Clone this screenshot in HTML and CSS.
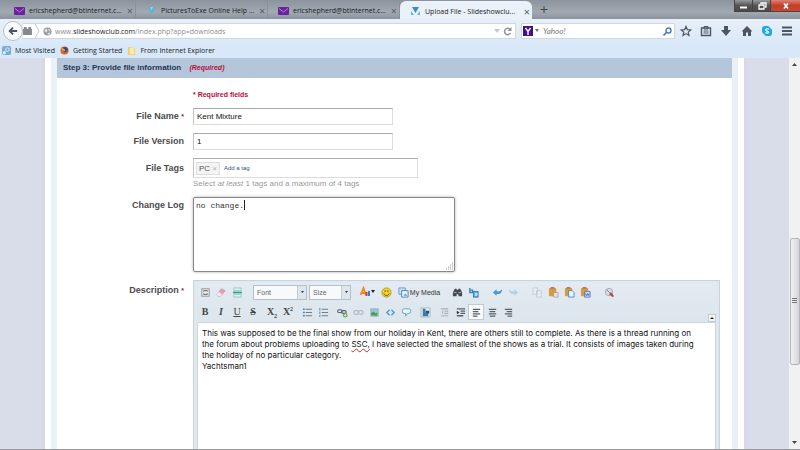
FILE: index.html
```html
<!DOCTYPE html>
<html lang="en">
<head>
<meta charset="utf-8">
<title>Upload File - Slideshowclub</title>
<link rel="stylesheet" href="styles.css">
</head>
<body>
<svg class="defs" aria-hidden="true">
  <symbol id="mail" viewBox="0 0 11 8"><rect width="11" height="8" rx="1" fill="#6b21a0"/><path d="M1 1.500 5.500 5 10 1.500" fill="none" stroke="#b48ad0"/></symbol>
  <symbol id="clip" viewBox="0 0 12 12"><rect x="1" y="1" width="8" height="9" rx="1" fill="#d99a3c"/><rect x="3" y="0" width="4" height="2" fill="#9b8468"/></symbol>
</svg>
<header class="browser">
  <div class="tabs">
    <div class="tab"><svg class="fav" viewBox="0 0 11 8"><use href="#mail"/></svg><span class="tab-title">ericshepherd@btinternet.c...</span><button class="close" aria-label="Close tab">×</button></div>
    <div class="tab"><svg class="fav" viewBox="0 0 11 8"><path d="M2 0h7L5.500 7z" fill="#54b2e4"/><path d="M4 0h3L5.500 4z" fill="#8bd0f0"/></svg><span class="tab-title">PicturesToExe Online Help ...</span><button class="close" aria-label="Close tab">×</button></div>
    <div class="tab"><svg class="fav" viewBox="0 0 11 8"><use href="#mail"/></svg><span class="tab-title">ericshepherd@btinternet.c...</span><button class="close" aria-label="Close tab">×</button></div>
    <div class="tab active"><svg class="fav" viewBox="0 0 11 8"><path d="M2 0h7L5.500 6z" fill="#2f8fc6"/><path d="M1 4v4h3zM10 4v4H7z" fill="#5cb4e0"/></svg><span class="tab-title">Upload File - Slideshowclu...</span><button class="close" aria-label="Close tab">×</button></div>
    <button class="new-tab" aria-label="New tab">+</button>
    <div class="window-buttons">
      <button class="win" aria-label="Minimize"><svg viewBox="0 0 10 8"><path d="M1 5.500h7" stroke="#fff" stroke-width="2"/></svg></button>
      <button class="win" aria-label="Restore"><svg viewBox="0 0 10 8"><path d="M4 2V1h5v4H8M2 3h5v4H2z" fill="none" stroke="#fff" stroke-width="1.300"/></svg></button>
      <button class="win exit" aria-label="Close"><svg viewBox="0 0 10 8"><path d="M3 1.500 7 6.500M7 1.500 3 6.500" stroke="#fff" stroke-width="1.700"/></svg></button>
    </div>
  </div>
  <nav class="navbar">
    <button class="back" aria-label="Back"><svg viewBox="0 0 12 12"><path d="M11 6H3M6 2 2 6l4 4" fill="none" stroke="#4b5560" stroke-width="2.200"/></svg></button>
    <div class="urlbar">
      <svg class="brick" viewBox="0 0 10 9"><path d="M0 2h1V0h3v2h2V0h3v2h1v7H0z" fill="#85898d"/></svg>
      <svg class="chev" viewBox="0 0 5 14"><path d="M0 0 4 7 0 14" fill="none" stroke="#c5ccd4"/></svg>
      <svg class="globe" viewBox="0 0 10 10"><circle cx="5" cy="5" r="4.500" fill="#999da1"/><path d="M2 3l2-1 1 2-1 2-2-1zM6 2l2 1v2L6 4zM5 7l2-1 1 1-2 2z" fill="#e4e6e8"/></svg>
      <span class="url">www.<b>slideshowclub.com</b>/index.php?app=downloads</span>
      <svg class="reload" viewBox="0 0 20 10"><path d="M1 3h6L4 7z" fill="#c4c8cc"/><path d="M17 3.200A3.200 3.200 0 1 0 17.500 7" fill="none" stroke="#8d9196" stroke-width="1.500"/><path d="M18.500 1v4h-4z" fill="#8d9196"/></svg>
    </div>
    <div class="searchbar">
      <svg class="yahoo" viewBox="0 0 10 10"><rect width="10" height="10" fill="#43108c"/><path d="M2.500 2 5 5.500 7.500 2M5 5.500V9" fill="none" stroke="#fff" stroke-width="1.400"/></svg>
      <svg class="drop" viewBox="0 0 5 4"><path d="M0 0h4L2 3z" fill="#777"/></svg>
      <input type="search" class="search" placeholder="Yahoo!" aria-label="Search with Yahoo">
      <svg class="lens" viewBox="0 0 9 9"><circle cx="5.500" cy="3.500" r="2.500" fill="none" stroke="#4779b8" stroke-width="1.400"/><path d="M3.500 5.500.5 8.500" stroke="#4779b8" stroke-width="1.700"/></svg>
    </div>
    <div class="nav-icons">
      <button aria-label="Bookmark"><svg viewBox="0 0 12 12"><path d="M6 1.500 7.300 4.600 10.800 4.900 8.200 7.100 9 10.500 6 8.600 3 10.500 3.800 7.100 1.200 4.900 4.700 4.600z" fill="none" stroke="#4d565f" stroke-width="1.200"/></svg></button>
      <button aria-label="Bookmarks list"><svg viewBox="0 0 12 12"><path d="M1.500 3h9v7.500h-9z" fill="none" stroke="#4d565f" stroke-width="1.400"/><path d="M4 1.500h4V4H4zM3.500 6h5M3.500 8h5" fill="none" stroke="#4d565f"/></svg></button>
      <button aria-label="Downloads"><svg viewBox="0 0 12 12"><path d="M4 1h4v4h3l-5 6-5-6h3z" fill="#4d565f"/></svg></button>
      <button aria-label="Home"><svg viewBox="0 0 12 12"><path d="M6 1 11 6l-1 1v4H7V7.500H5V11H2V7L1 6z" fill="#4d565f"/></svg></button>
      <button aria-label="Skype"><svg viewBox="0 0 12 12"><rect x="1" y="1" width="8" height="8" rx="3" fill="#18a7e8"/><rect x="3" y="3" width="8" height="8" rx="3" fill="#18a7e8"/><path d="M8 4.300C6.500 3.300 4.300 3.800 4.500 5c.2 1.400 3.200.8 3.200 2.100 0 1.300-2.200 1.300-3.300.4" fill="none" stroke="#fff" stroke-width="1.200"/></svg></button>
      <button aria-label="Menu"><svg viewBox="0 0 12 12"><path d="M1 2.500h10M1 6h10M1 9.500h10" stroke="#4d565f" stroke-width="2"/></svg></button>
    </div>
  </nav>
  <nav class="bookmarks">
    <a href="#"><svg viewBox="0 0 10 10"><rect width="10" height="10" rx="2" fill="#78abd3"/><path d="M1 6h3v3H1z" fill="#e6f3fc"/><circle cx="6" cy="4" r="2" fill="none" stroke="#e6f3fc"/></svg>Most Visited</a>
    <a href="#"><svg viewBox="0 0 10 10"><circle cx="5" cy="5" r="4.500" fill="#e0622a"/><circle cx="5.500" cy="4" r="3" fill="#2a4f8e"/><path d="M1 2c2 0 4 1 5 3-1 2-4 1-4-1z" fill="#f09a3a"/></svg>Getting Started</a>
    <a href="#"><svg viewBox="0 0 10 10"><path d="M1 1h4l1 1h3v8H1z" fill="#f0cf67"/><path d="M3 2h5v7H3z" fill="#fbeaa5"/></svg>From Internet Explorer</a>
  </nav>
</header>
<div class="viewport">
  <div class="gutter"></div>
  <main class="page">
    <h1 class="step">Step 3: Provide file information <em>(Required)</em></h1>
    <form class="form">
      <p class="required">* Required fields</p>
      <label class="label" for="name">File Name <i>*</i></label>
      <input class="field" id="name" type="text" value="Kent Mixture">
      <label class="label" for="version">File Version</label>
      <input class="field" id="version" type="text" value="1">
      <span class="label tall">File Tags</span>
      <div class="tags-cell">
        <div class="tags"><span class="tag">PC <button type="button" aria-label="Remove PC">×</button></span><a href="#">Add a tag</a></div>
        <p class="hint">Select <em>at least</em> 1 tags and a maximum of 4 tags</p>
      </div>
      <label class="label" for="log">Change Log</label>
      <div class="log-wrap">
        <textarea class="log" id="log">no change.</textarea>
        <span class="caret"></span>
        <svg class="grip" viewBox="0 0 9 9"><path d="M7 1h1M5 3h1M7 3h1M3 5h1M5 5h1M7 5h1M1 7h1M3 7h1M5 7h1M7 7h1" stroke="#999"/></svg>
      </div>
      <span class="label tall" id="desc-label">Description <i>*</i></span>
      <div class="editor">
        <div class="toolbar">
          <div class="row top">
            <div class="group">
              <button type="button" aria-label="Source"><svg viewBox="0 0 12 12"><rect x="2" y="2" width="8" height="8" fill="#eee" stroke="#8a9098"/><path d="M4 5V4h4v1M4 7v1h4V7" fill="none" stroke="#555"/></svg></button>
              <button type="button" aria-label="Remove format"><svg viewBox="0 0 12 12"><path d="m1 8 5-6 4 2-5 6H2z" fill="#eda0ac" stroke="#c88d9b" stroke-width=".7"/><path d="m1 8 2-2.500 3.500 2.500L5 10H2z" fill="#f7e8ee"/></svg></button>
              <button type="button" aria-label="Page break"><svg viewBox="0 0 12 12"><path d="M2 1h8v3H2zM2 8h8v3H2z" fill="#d6f1f1" stroke="#88bfc6" stroke-width=".8"/><path d="M1 6h10" stroke="#2ea66a" stroke-width="1.800"/></svg></button>
            </div>
            <div class="group combos">
              <button type="button" class="combo font"><span>Font</span><i><svg viewBox="0 0 5 4"><path d="M1 1h3L2.500 3z" fill="#333"/></svg></i></button>
              <button type="button" class="combo size"><span>Size</span><i><svg viewBox="0 0 5 4"><path d="M1 1h3L2.500 3z" fill="#333"/></svg></i></button>
            </div>
            <div class="group spaced">
              <button type="button" aria-label="Text color"><svg class="wide" viewBox="0 0 16 12"><path d="M1.500 9 4.500 2 7 9M3 7h3" fill="none" stroke="#ef8a1d" stroke-width="1.800"/><path d="M6.500 6h2v4h-2z" fill="#d43d31"/><path d="M9 5h2v5H9z" fill="#3b80c6"/><path d="M12 4h4l-2 3z" fill="#222"/></svg></button>
              <button type="button" aria-label="Emoticons"><svg viewBox="0 0 12 12"><circle cx="6" cy="6" r="5" fill="#f9d52b" stroke="#a38312" stroke-width=".8"/><path d="M4.500 3.500v2M7.500 3.500v2M3 7c1 3 5 3 6 0" fill="none" stroke="#594512"/></svg></button>
              <button type="button" class="media"><svg viewBox="0 0 12 12"><path d="M1 1h7v7H1z" fill="#c7dff3" stroke="#679bc9"/><path d="M4 4h7v7H4z" fill="#eef6fd" stroke="#477fb6"/><path d="M6 9.500 8 7l2 2.500z" fill="#5294c7"/></svg>My Media</button>
            </div>
            <div class="group">
              <button type="button" aria-label="Find"><svg viewBox="0 0 12 12"><path d="M3 2h2v1h2V2h2l2 4v4H7V8H5v2H1V6z" fill="#454b51"/><path d="M2 6h3M7 6h3" stroke="#aab0b6"/></svg></button>
              <button type="button" aria-label="Replace"><svg viewBox="0 0 12 12"><path d="M2 1v5h3V3.500H2" fill="none" stroke="#3580c3" stroke-width="1.400"/><rect x="6" y="5" width="5" height="6" fill="#67b0de" stroke="#2f78b5"/><path d="M3 7v3h2M8 7h2v2H8z" fill="none" stroke="#d4ebfa"/></svg></button>
            </div>
            <div class="group">
              <button type="button" aria-label="Undo"><svg viewBox="0 0 12 12"><path d="M1 6 5 2.500v2c3 1 4 0 6-2C11 7 8 8 5 7.500v2z" fill="#4598d3"/></svg></button>
              <button type="button" aria-label="Redo" class="dim"><svg viewBox="0 0 12 12"><path d="M11 6 7 2.500v2c-3 1-4 0-6-2C1 7 4 8 7 7.500v2z" fill="#6cb0df"/></svg></button>
            </div>
            <div class="group">
              <button type="button" aria-label="Copy" class="dim"><svg viewBox="0 0 12 12"><path d="M1 1h5v7H1zM5 4h5v7H5z" fill="#f4f7fb" stroke="#8f9db3"/></svg></button>
              <button type="button" aria-label="Paste"><svg viewBox="0 0 12 12"><use href="#clip"/><path d="M6 6h5v5H6z" fill="#e1e1dc" stroke="#969690" stroke-width=".7"/></svg></button>
              <button type="button" aria-label="Paste as text"><svg viewBox="0 0 12 12"><use href="#clip"/><path d="M5 4h4l2 2v5H5z" fill="#edf6ff" stroke="#458bd5"/></svg></button>
              <button type="button" aria-label="Paste from Word"><svg viewBox="0 0 12 12"><use href="#clip"/><path d="M5 5h6v6H5z" fill="#d8e1ff" stroke="#5872d3"/><path d="m6 7 1 2.500L8 7l1 2.500L10 7" fill="none" stroke="#3556c0" stroke-width=".8"/></svg></button>
            </div>
            <div class="group">
              <button type="button" aria-label="Auto save"><svg viewBox="0 0 12 12"><circle cx="5.500" cy="5.500" r="4" fill="#d9dde1" stroke="#a2a8ae"/><path d="m3 3 3 3" stroke="#777"/><path d="M6 6h2l3 4-2 1-3-3z" fill="#b8434b"/></svg></button>
            </div>
          </div>
          <div class="row bottom">
            <div class="group letters">
              <button type="button"><b>B</b></button><button type="button"><b><em>I</em></b></button><button type="button"><u>U</u></button><button type="button"><b><s>S</s></b></button>
            </div>
            <div class="group letters">
              <button type="button"><b>X<sub>2</sub></b></button><button type="button"><b>X<sup>2</sup></b></button>
            </div>
            <div class="group">
              <button type="button" aria-label="Bulleted list"><svg viewBox="0 0 12 12"><path d="M4 2.500h7M4 6h7M4 9.500h7" stroke="#6a737c"/><path d="M1 2.500h2M1 6h2M1 9.500h2" stroke="#4386c9" stroke-width="1.600"/></svg></button>
              <button type="button" aria-label="Numbered list"><svg viewBox="0 0 12 12"><path d="M4 2.500h7M4 6h7M4 9.500h7" stroke="#6a737c"/><path d="M2 1v3M2 5v2.500M2 8.500V11" stroke="#4386c9"/></svg></button>
            </div>
            <div class="group">
              <button type="button" aria-label="Link"><svg viewBox="0 0 12 12"><rect x="0.700" y="3" width="5" height="3" rx="1.500" fill="none" stroke="#59616a" stroke-width="1.200"/><rect x="5" y="4" width="5" height="3" rx="1.500" fill="none" stroke="#59616a" stroke-width="1.200"/><circle cx="9" cy="9" r="2.500" fill="#5ea543"/><path d="M7.500 9h3M9 7.500v3" stroke="#fff" stroke-width=".8"/></svg></button>
              <button type="button" aria-label="Unlink" class="dim"><svg viewBox="0 0 12 12"><rect x="1" y="4" width="5" height="4" rx="2" fill="none" stroke="#737b84" stroke-width="1.300"/><rect x="6" y="4" width="5" height="4" rx="2" fill="none" stroke="#737b84" stroke-width="1.300"/></svg></button>
              <button type="button" aria-label="Image"><svg viewBox="0 0 12 12"><rect x="2" y="2" width="8" height="8" fill="#8dc6e6" stroke="#a4adb3"/><path d="M2.500 9V6.500L5 5l2 2 2-1v3.500z" fill="#42a047"/></svg></button>
              <button type="button" aria-label="Code"><svg viewBox="0 0 12 12"><path d="M5 3 2 6l3 3M7 3l3 3-3 3" fill="none" stroke="#4c9bd8" stroke-width="1.500"/></svg></button>
              <button type="button" aria-label="Quote"><svg viewBox="0 0 12 12"><path d="M3.500 2h5a2 2 0 0 1 2 2v1a2 2 0 0 1-2 2H7l-2 3V7H3.500a2 2 0 0 1-2-2V4a2 2 0 0 1 2-2z" fill="#eaf5fd" stroke="#599fd3"/></svg></button>
            </div>
            <div class="group">
              <button type="button" aria-label="Insert media"><svg viewBox="0 0 12 12"><path d="M1 1h10v10H1z" fill="#e6edf3" stroke="#aab8c6"/><path d="M3 2v8h6V6H6V2z" fill="#397ba8"/><path d="M6 4h4v3H7z" fill="#274f70"/></svg></button>
            </div>
            <div class="group">
              <button type="button" aria-label="Outdent" class="dim"><svg viewBox="0 0 12 12"><path d="M2 2h8M6 4.500h4M6 7h4M2 9.500h8M4 4v3.500" stroke="#59616a" stroke-width="1.200"/></svg></button>
              <button type="button" aria-label="Indent"><svg viewBox="0 0 12 12"><path d="M2 2h9M6 4.500h5M6 7h5M2 9.500h7" stroke="#59616a" stroke-width="1.500"/><path d="m2 4 3 2-3 2z" fill="#333"/></svg></button>
              <button type="button" aria-label="Align left" class="on"><svg viewBox="0 0 12 12"><path d="M2 2.500h8M2 5h6M2 7.500h8M2 10h5" stroke="#59616a" stroke-width="1.300"/></svg></button>
              <button type="button" aria-label="Align center"><svg viewBox="0 0 12 12"><path d="M2 2.500h8M3 5h6M2 7.500h8M3 10h6" stroke="#59616a" stroke-width="1.300"/></svg></button>
              <button type="button" aria-label="Align right"><svg viewBox="0 0 12 12"><path d="M2 2.500h8M4 5h6M2 7.500h8M5 10h5" stroke="#59616a" stroke-width="1.300"/></svg></button>
            </div>
            <button type="button" class="collapse" aria-label="Collapse toolbar"><svg viewBox="0 0 6 6"><path d="M1 4h4L3 2z" fill="#222"/></svg></button>
          </div>
        </div>
        <div class="body" role="textbox" contenteditable="true" spellcheck="false" aria-labelledby="desc-label">This was supposed to be the final show from our holiday in Kent, there are others still to complete. As there is a thread running on<br>the forum about problems uploading to <span class="typo">SSC,</span> I have selected the smallest of the shows as a trial. It consists of images taken during<br>the holiday of no particular category.<br>Yachtsman1</div>
      </div>
    </form>
  </main>
  <div class="gutter right"></div>
  <div class="scrollbar">
    <svg class="arrow" viewBox="0 0 6 4"><path d="M0 4h5L2.500 1z" fill="#444"/></svg>
    <div class="thumb"><svg viewBox="0 0 5 6"><path d="M0 .5h5M0 2.500h5M0 4.500h5" stroke="#777"/></svg></div>
    <svg class="arrow" viewBox="0 0 6 4"><path d="M0 0h5L2.500 3z" fill="#444"/></svg>
  </div>
</div>
</body>
</html>
```
FILE: styles.css
```css
* { box-sizing: border-box; }
body {
  margin: 0;
  height: 100vh;
  display: flex;
  flex-direction: column;
  overflow: hidden;
  border-bottom: 1px solid #999;
  background: #fff;
  font: 8px/11px "Liberation Sans", Arial, sans-serif;
  color: #222;
}
button {
  border: 0;
  padding: 0;
  background: none;
  font: inherit;
  color: inherit;
}
svg { display: block; flex: none; }
a { text-decoration: none; color: inherit; }
.defs { position: absolute; width: 0; height: 0; }

/* Browser chrome */
.browser {
  flex: none;
  font-family: "Open Sans", "Noto Sans", sans-serif;
  font-size: 7px;
  background: linear-gradient(#e8eff8 19px, #d9e8f8 45px);
}
.tabs {
  display: flex;
  height: 19px;
  padding-left: 4px;
  background: linear-gradient(#8b949e, #a1a9b1 12px, #8b949d);
}
.tab {
  display: flex;
  align-items: center;
  width: 132px;
  padding: 2px 1px 0 10px;
  gap: 4px;
  color: #15191e;
  border-right: 1px solid #89929b;
}
.tab.active {
  margin-top: 1px;
  border: 0;
  border-radius: 6px 6px 0 0;
  background: #eaf1f9;
}
.fav { width: 11px; height: 8px; }
.tab-title { flex: 1; white-space: nowrap; }
.close { width: 8px; font-size: 11px; color: #555c64; }
.new-tab { width: 24px; font-size: 14px; color: #3e444a; }
.window-buttons { display: flex; margin-left: auto; height: 12px; }
.win {
  display: grid;
  place-items: center;
  width: 18px;
  background: linear-gradient(#9a9a9a, #555 50%, #4a4a4a);
  border: solid #444;
  border-width: 0 0 1px 1px;
}
.win svg { width: 10px; height: 8px; }
.win.exit { width: 30px; background: linear-gradient(#d88476, #c43d28 50%, #c9482f); }

.navbar { display: flex; align-items: center; height: 24px; padding: 0 7px 0 3px; }
.back {
  display: grid;
  place-items: center;
  width: 20px;
  height: 20px;
  border: 1px solid #b7bfc8;
  border-radius: 50%;
  background: #f8fbfe;
}
.back svg { width: 10px; height: 10px; }
.urlbar, .searchbar {
  display: flex;
  align-items: center;
  height: 16px;
  background: #fff;
  border: 1px solid #cfd8e1;
}
.urlbar { flex: 1; border-left: 0; }
.brick { width: 9px; height: 8px; }
.chev { width: 5px; height: 14px; margin: 0 3px; }
.globe { width: 9px; height: 9px; margin-right: 3px; }
.url { flex: 1; color: #8d9094; }
.url b { font-weight: 400; color: #16191c; }
.reload { width: 20px; height: 10px; margin-right: 2px; }
.searchbar { width: 154px; margin: 0 5px; padding: 0 2px 0 1px; }
.yahoo { width: 10px; height: 10px; }
.drop { width: 5px; height: 4px; margin: 0 2px; }
.search {
  flex: 1;
  min-width: 0;
  padding: 0 1px;
  border: 0;
  background: none;
  font: italic 8px/12px "Lato", sans-serif;
}
.search::placeholder { color: #777; }
.lens { width: 9px; height: 9px; }
.nav-icons { display: flex; justify-content: space-between; width: 113px; }
.nav-icons svg { width: 12px; height: 12px; }

.bookmarks { display: flex; gap: 5px; height: 15px; padding-left: 2px; }
.bookmarks a { display: flex; align-items: center; gap: 4px; color: #15191e; }
.bookmarks svg { width: 9px; height: 9px; }

/* Page frame */
.viewport { flex: 1; min-height: 0; display: flex; }
.gutter {
  flex: none;
  width: 45px;
  background: #d9dde9;
  border-right: 3px solid #d7d7e5;
}
.gutter.right { border-right: 0; border-left: 3px solid #d7d9e8; }
.page {
  flex: 1;
  min-width: 0;
  overflow: hidden;
  margin: 0 6px;
  border: solid #e9f0f6;
  border-width: 0 6px;
}
.step {
  margin: 0;
  padding: 0 6px;
  background: #b5c6da;
  font-size: 8px;
  line-height: 20px;
  color: #1d3652;
}
.step em { margin-left: 6px; font-size: 7px; color: #b01039; }
.scrollbar {
  display: flex;
  flex-direction: column;
  align-items: center;
  width: 11px;
  padding: 4px 0;
  background: #f0f1f1;
}
.arrow { width: 6px; height: 4px; }
.thumb {
  display: grid;
  place-items: center;
  width: 10px;
  height: 33%;
  margin: auto 0 17vh;
  border: 1px solid #b4b6bb;
  border-radius: 2px;
  background: linear-gradient(90deg, #f2f2f3, #d3d5da);
}
.thumb svg { width: 5px; height: 6px; }

/* Form */
.form {
  display: grid;
  grid-template-columns: 127px minmax(0, 1fr);
  gap: 8px 9px;
  padding: 11px 12px 0 0;
  align-items: start;
}
.required {
  grid-column: 2;
  margin: 0;
  font-size: 7px;
  font-weight: 700;
  color: #b01039;
}
.label {
  text-align: right;
  font-size: 9px;
  font-weight: 700;
  line-height: 17px;
  color: #4c4c4c;
}
.label.tall { line-height: 20px; }
.label i { font-size: 7px; font-style: normal; color: #b01039; }
.field, .tags, .log {
  border: 1px solid #dcdcdc;
  border-top-color: #aaa;
  border-left-color: #c4c4c4;
  background: #fff;
}
.field {
  width: 200px;
  height: 17px;
  padding: 0 3px;
  font: 8px/15px "Liberation Sans", Arial, sans-serif;
  color: #111;
}
.tags {
  display: flex;
  align-items: center;
  gap: 4px;
  width: 225px;
  height: 20px;
  padding: 0 2px;
}
.tag {
  padding: 0 2px;
  border: 1px solid #ddd;
  background: #f4f4f4;
  color: #555;
}
.tag button { color: #aaa; }
.tags a { font-size: 6px; color: #285587; }
.hint { margin: 0; color: #999; }
.log-wrap { position: relative; width: 262px; }
.log {
  display: block;
  width: 100%;
  height: 75px;
  padding: 2px;
  resize: none;
  outline: 0;
  border: 1px solid #888;
  border-radius: 2px;
  box-shadow: 0 0 3px #aaa;
  font: 8px/11px "Liberation Mono", monospace;
  color: #333;
}
.caret {
  position: absolute;
  left: 51px;
  top: 3px;
  width: 1px;
  height: 10px;
  background: #222;
}
.grip { position: absolute; right: 1px; bottom: 1px; width: 9px; height: 9px; }

/* Rich text editor */
.editor {
  min-height: 320px;
  display: flex;
  flex-direction: column;
  padding: 1px 3px;
  border: 1px solid #c8d3dd;
  background: #e0e8ef;
}
.toolbar { height: 40px; background: linear-gradient(#e3eaf1, #dde6ed); }
.row { display: flex; align-items: center; height: 20px; }
.top { gap: 8px; }
.bottom { gap: 3px; }
.group { display: flex; align-items: center; }
.spaced { gap: 3px; }
.combos { gap: 2px; }
.group button {
  display: flex;
  align-items: center;
  justify-content: center;
  width: 16px;
  height: 16px;
}
.group svg { width: 11px; height: 11px; }
.group .wide { width: 16px; height: 12px; }
.group .combo {
  justify-content: space-between;
  height: 15px;
  padding-left: 3px;
  border: 1px solid #b5c0ca;
  background: #f7f9fb;
  font-size: 7px;
  color: #666;
}
.group .font { width: 54px; }
.group .size { width: 42px; }
.combo i {
  display: grid;
  place-items: center;
  width: 9px;
  height: 13px;
  border-left: 1px solid #c4ced7;
  background: #dde5ed;
}
.group .combo svg { width: 5px; height: 4px; }
.group .media { width: 44px; gap: 1px; font-size: 7px; color: #333; white-space: nowrap; }
.group .dim { opacity: .4; }
.group .on { background: #f8fafb; border: 1px solid #c0c8d0; }
.letters button { font: 10px/12px "Liberation Serif", serif; color: #444; }
.letters sub, .letters sup { font-size: 6px; line-height: 0; }
.collapse {
  align-self: flex-end;
  margin-left: auto;
  width: 8px;
  height: 8px;
  border: 1px solid #c3cbd2;
  background: #f3f5f7;
}
.collapse svg { width: 6px; height: 6px; }
.body {
  flex: 1;
  padding: 5px 4px;
  outline: 0;
  border: 1px solid #cbd5dd;
  background: #fff;
  font: 8px/11px "Inter", "Liberation Sans", sans-serif;
  color: #111;
  white-space: nowrap;
}
.typo { text-decoration: underline wavy #d22 1px; }
```
